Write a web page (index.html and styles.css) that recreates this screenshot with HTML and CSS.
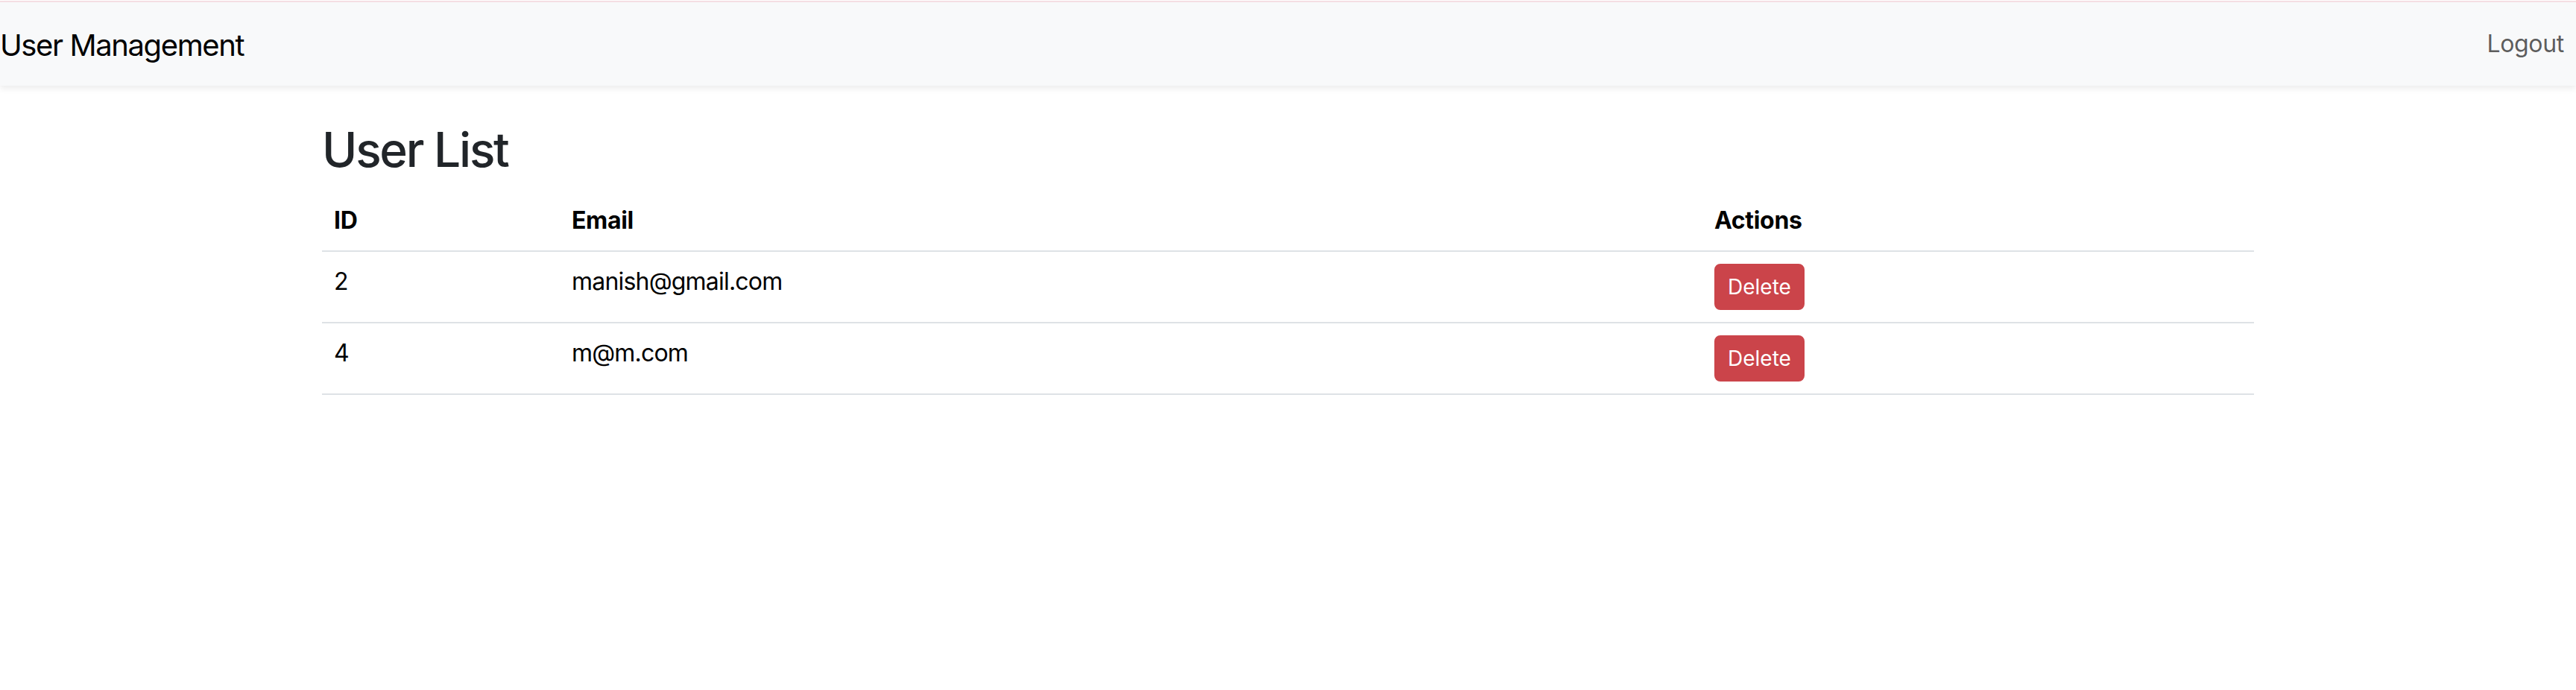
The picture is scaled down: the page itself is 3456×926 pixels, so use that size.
FILE: index.html
```html
<!DOCTYPE html>
<html lang="en">
<head>
<meta charset="utf-8">
<title>User Management</title>
<link rel="stylesheet" href="styles.css">
</head>
<body>
<div class="topline"></div>
<nav class="navbar">
  <span class="brand">User Management</span>
  <a class="nav-link" href="#">Logout</a>
</nav>
<main class="container">
  <h2 class="title">User List</h2>
  <table class="table">
    <thead>
      <tr>
        <th class="col-id">ID</th>
        <th class="col-email">Email</th>
        <th class="col-actions">Actions</th>
      </tr>
    </thead>
    <tbody>
      <tr>
        <td>2</td>
        <td>manish@gmail.com</td>
        <td><button class="btn-danger" type="button">Delete</button></td>
      </tr>
      <tr>
        <td>4</td>
        <td>m@m.com</td>
        <td><button class="btn-danger" type="button">Delete</button></td>
      </tr>
    </tbody>
  </table>
</main>
</body>
</html>
```
FILE: styles.css
```css
* { box-sizing: border-box; }
html, body {
  margin: 0;
  padding: 0;
  background: #fff;
  font-family: Inter, "Liberation Sans", sans-serif;
  color: #212529;
}
.topline {
  height: 2px;
  margin-top: 1px;
  background: #f6e0e4;
}
.navbar {
  display: flex;
  align-items: center;
  justify-content: space-between;
  height: 112px;
  padding: 16px 0;
  background: #f8f9fa;
  box-shadow: 0 4px 8px rgba(0, 0, 0, 0.075);
  position: relative;
}
.brand {
  font-size: 40px;
  line-height: 60px;
  padding: 12px 0 8px;
  color: #000;
  letter-spacing: -0.035em;
}
.nav-link {
  font-size: 32px;
  line-height: 48px;
  padding: 16px;
  color: rgba(0, 0, 0, 0.65);
  text-decoration: none;
  letter-spacing: -0.01em;
}
.container {
  width: 2640px;
  margin: 48px auto 0;
  padding: 0 24px;
}
.title {
  margin: 0 0 16px;
  font-size: 64px;
  line-height: 76.8px;
  font-weight: 500;
  color: #212529;
  letter-spacing: -0.035em;
}
.table {
  width: 100%;
  border-collapse: collapse;
  color: #000;
  font-size: 32px;
  line-height: 48px;
}
.table th, .table td {
  padding: 16px;
  text-align: left;
  vertical-align: top;
  border-bottom: 2px solid #dee2e6;
}
.table td { letter-spacing: -0.025em; }
.table th { font-weight: 700; letter-spacing: -0.01em; }
.col-id { width: 319px; }
.col-email { width: 1533px; }
.col-actions { width: 740px; }
.btn-danger {
  display: inline-block;
  font-family: inherit;
  font-size: 28px;
  line-height: 42px;
  padding: 8px 16px;
  border: 2px solid #cb444a;
  border-radius: 8px;
  background: #cb444a;
  color: #fff;
  letter-spacing: 0;
  cursor: pointer;
}
```
